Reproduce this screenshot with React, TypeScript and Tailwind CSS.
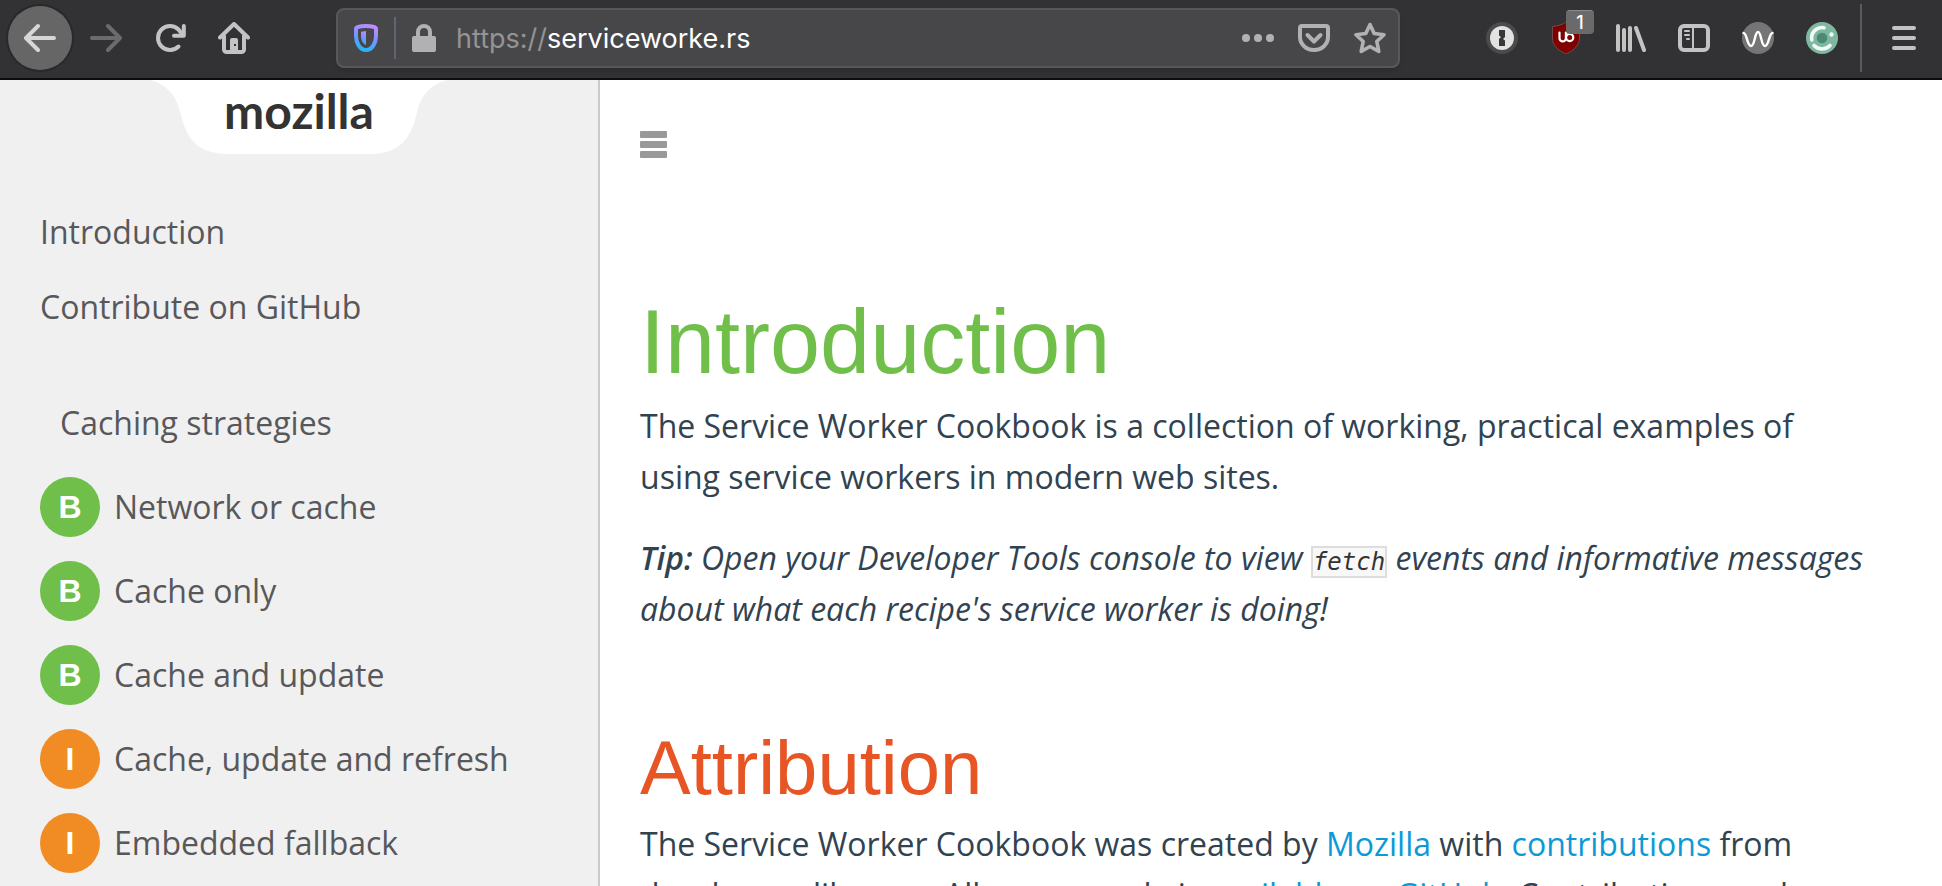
import type { ReactNode } from "react";

function ToolButton({ label, className = "", children }: { label: string; className?: string; children: ReactNode }) {
  return (
    <button type="button" aria-label={label} className={`flex size-8 shrink-0 items-center justify-center ${className}`}>
      {children}
    </button>
  );
}

function BackIcon() {
  return (
    <svg className="size-8" viewBox="0 0 32 32" fill="none" stroke="currentColor" strokeWidth="4" strokeLinecap="round" strokeLinejoin="round" aria-hidden="true">
      <path d="M30 16H3M14 4 2 16l12 12" />
    </svg>
  );
}

function ForwardIcon() {
  return (
    <svg className="size-8" viewBox="0 0 32 32" fill="none" stroke="currentColor" strokeWidth="4" strokeLinecap="round" strokeLinejoin="round" aria-hidden="true">
      <path d="M2 16h27M18 4l12 12-12 12" />
    </svg>
  );
}

function ReloadIcon() {
  return (
    <svg className="size-8" viewBox="0 0 32 32" fill="none" stroke="currentColor" strokeWidth="4" strokeLinecap="round" strokeLinejoin="round" aria-hidden="true">
      <path d="M24.500 24.500A12 12 0 1 1 24.500 7.500L28.500 12.500" />
      <path d="M29.800 4v9.800H20" />
    </svg>
  );
}

function HomeIcon() {
  return (
    <svg className="size-8" viewBox="0 0 32 32" aria-hidden="true">
      <path d="M2 15.500 16 2l14 13.500M6 14v13.500a2.500 2.500 0 0 0 2.500 2.500h15a2.500 2.500 0 0 0 2.500-2.500V14" fill="none" stroke="currentColor" strokeWidth="4" strokeLinecap="round" strokeLinejoin="round" />
      <path d="M12 30V18a2 2 0 0 1 2-2h4a2 2 0 0 1 2 2v12z" fill="currentColor" />
      <rect x="16" y="22" width="2" height="2" fill="#323234" />
    </svg>
  );
}

function ShieldIcon() {
  return (
    <svg className="h-7 w-6" viewBox="0 0 24 28" aria-hidden="true">
      <defs>
        <linearGradient id="shield" x1="0.7" y1="0" x2="0.4" y2="1">
          <stop offset="0" stopColor="#b98cff" />
          <stop offset="0.5" stopColor="#7a94ff" />
          <stop offset="1" stopColor="#24b5fa" />
        </linearGradient>
      </defs>
      <path d="M12 2c3.500 0 6.500.6 9 1.300.6.2 1 .6 1 1.200V12c0 6.500-3.500 14-10 14S2 18.500 2 12V4.500c0-.6.400-1 1-1.200C5.500 2.600 8.500 2 12 2z" fill="none" stroke="url(#shield)" strokeWidth="4" />
      <path d="M12 7v14c-3-1-5-5-5-9V7.700z" fill="url(#shield)" />
    </svg>
  );
}

function LockIcon() {
  return (
    <svg className="h-7 w-6" viewBox="0 0 24 28" aria-hidden="true">
      <path d="M6 13V8a6 6 0 0 1 12 0v5" fill="none" stroke="currentColor" strokeWidth="4" />
      <rect x="0" y="12" width="24" height="16" rx="2" fill="currentColor" />
    </svg>
  );
}

function DotsIcon() {
  return (
    <svg className="size-8" viewBox="0 0 32 32" fill="currentColor" aria-hidden="true">
      <circle cx="4" cy="16" r="4" />
      <circle cx="16" cy="16" r="4" />
      <circle cx="28" cy="16" r="4" />
    </svg>
  );
}

function PocketIcon() {
  return (
    <svg className="size-8" viewBox="0 0 32 32" fill="none" stroke="currentColor" strokeWidth="4" strokeLinecap="round" strokeLinejoin="round" aria-hidden="true">
      <path d="M4 4h24a2 2 0 0 1 2 2v9a14 13 0 0 1-28 0V6a2 2 0 0 1 2-2z" />
      <path d="m9.500 13 6.500 6.500L22.500 13" />
    </svg>
  );
}

function StarIcon() {
  return (
    <svg className="size-8" viewBox="0 0 32 32" fill="none" stroke="currentColor" strokeWidth="3.600" strokeLinejoin="round" aria-hidden="true">
      <path d="m16 2.500 4.200 9 9.800 1.300-7.200 6.700 2 9.900L16 24.500l-8.800 4.900 2-9.900L2 12.800l9.800-1.300z" />
    </svg>
  );
}

function KeyholeIcon() {
  return (
    <svg className="size-8" viewBox="0 0 32 32" aria-hidden="true">
      <circle cx="16" cy="16" r="16" fill="#4b4b4c" />
      <circle cx="16" cy="16" r="12" fill="#e2e2e3" />
      <path d="M13 8h6v7l-2 2 2 1.500V24h-6v-7l2-2-2-1.500z" fill="#38383a" />
    </svg>
  );
}

function BlockerIcon() {
  return (
    <svg className="size-8" viewBox="0 0 32 32" aria-hidden="true">
      <path d="M16 0c4 3 8 4 13.500 4.500V16c0 7-5 12-13.500 16C7.500 28 2.500 23 2.500 16V4.500C8 4 12 3 16 0z" fill="#800000" stroke="#8b7474" strokeWidth="0.500" />
      <path d="M9.500 10.500v5.700a3.200 3.200 0 0 0 6.400 0v-5.700M15.900 15.500v-5" fill="none" stroke="#fff" strokeWidth="2.200" strokeLinecap="round" />
      <circle cx="19.700" cy="15.500" r="3.600" fill="none" stroke="#fff" strokeWidth="2.200" />
    </svg>
  );
}

function LibraryIcon() {
  return (
    <svg className="size-8" viewBox="0 0 32 32" fill="none" stroke="currentColor" strokeWidth="4" strokeLinecap="round" aria-hidden="true">
      <path d="M4 4v24M10 8v20M16 6v22M22 6l8 22" />
    </svg>
  );
}

function SidebarIcon() {
  return (
    <svg className="size-8" viewBox="0 0 32 32" fill="none" stroke="currentColor" aria-hidden="true">
      <rect x="2" y="4" width="28" height="24" rx="4" strokeWidth="4" />
      <path d="M15 6v20" strokeWidth="2" />
      <path d="M7 9h4M7 13h4M9 17h2" strokeWidth="2" strokeLinecap="round" />
    </svg>
  );
}

function WaveIcon() {
  return (
    <svg className="size-8" viewBox="0 0 32 32" aria-hidden="true">
      <circle cx="16" cy="16" r="16" fill="#757575" />
      <path d="M1.500 11C5 11 5 24 9 24s3.500-14 7-14 3 14 7 14 4-13 7.500-13" fill="none" stroke="#fff" strokeWidth="2.400" strokeLinecap="round" />
    </svg>
  );
}

function OrbitIcon() {
  return (
    <svg className="size-8" viewBox="0 0 32 32" fill="none" aria-hidden="true">
      <circle cx="16" cy="16" r="16" fill="#7fb8a2" />
      <circle cx="16" cy="16" r="5.300" fill="#4d8a73" />
      <path d="M5.800 18A10.500 10.500 0 0 1 18 5.700M8 23.500a11 11 0 0 0 16 0" stroke="#f2faf6" strokeWidth="3.600" strokeLinecap="round" />
      <circle cx="25.500" cy="12.500" r="2.200" fill="#f2faf6" />
    </svg>
  );
}

function AppMenuIcon() {
  return (
    <svg className="h-8 w-6" viewBox="0 0 24 32" fill="none" stroke="currentColor" strokeWidth="4" strokeLinecap="round" aria-hidden="true">
      <path d="M2 6h20M2 16h20M2 26h20" />
    </svg>
  );
}

function Toolbar() {
  return (
    <header className="flex h-20 shrink-0 items-center border-b-2 border-[#0c0c0d] bg-[#323234] pb-[2px] text-[#c3c3c4]">
      <div className="flex items-center pl-2">
        <button type="button" aria-label="Back" className="flex size-16 items-center justify-center rounded-full bg-[#666667] text-[#d6d6d7] ring-2 ring-[#29292b]">
          <BackIcon />
        </button>
        <ToolButton label="Forward" className="ml-[18px] text-[#6b6b6c]"><ForwardIcon /></ToolButton>
        <ToolButton label="Reload" className="ml-8"><ReloadIcon /></ToolButton>
        <ToolButton label="Home" className="ml-8"><HomeIcon /></ToolButton>
      </div>
      <div className="ml-[86px] flex h-[60px] min-w-0 flex-1 items-center rounded-lg border-2 border-[#58585a] bg-[#474749] pl-4 pr-3 text-[#b1b1b3] shadow-md">
        <button type="button" aria-label="Tracking protection"><ShieldIcon /></button>
        <span className="ml-4 h-[42px] w-[2px] bg-[#5f6673]" />
        <button type="button" aria-label="Connection security" className="ml-4"><LockIcon /></button>
        <div role="textbox" aria-label="Address" className="ml-5 flex-1 truncate pt-[2px] font-['Inter',sans-serif] text-[27px] leading-10 text-white">
          <span className="text-[#949495]">https://</span>serviceworke.rs
        </div>
        <div className="flex gap-6">
          <ToolButton label="Page actions"><DotsIcon /></ToolButton>
          <ToolButton label="Save to Pocket"><PocketIcon /></ToolButton>
          <ToolButton label="Bookmark this page"><StarIcon /></ToolButton>
        </div>
      </div>
      <div className="ml-[86px] flex items-center gap-8">
        <ToolButton label="Password manager"><KeyholeIcon /></ToolButton>
        <ToolButton label="Content blocker" className="relative">
          <BlockerIcon />
          <span className="absolute -top-3 left-4 flex h-6 w-7 items-center justify-center rounded-sm border-t border-[#8a8a8b] bg-[#6a6a6b] font-['Inter',sans-serif] text-lg font-medium text-white">1</span>
        </ToolButton>
        <ToolButton label="Library"><LibraryIcon /></ToolButton>
        <ToolButton label="Sidebars"><SidebarIcon /></ToolButton>
        <ToolButton label="Wave extension"><WaveIcon /></ToolButton>
        <ToolButton label="Container extension"><OrbitIcon /></ToolButton>
      </div>
      <span className="ml-[22px] h-[68px] w-[2px] bg-[#5b5b5d]" />
      <ToolButton label="Open application menu" className="ml-[26px] mr-[22px]"><AppMenuIcon /></ToolButton>
    </header>
  );
}

const recipes = [
  { level: "B", name: "Network or cache" },
  { level: "B", name: "Cache only" },
  { level: "B", name: "Cache and update" },
  { level: "I", name: "Cache, update and refresh" },
  { level: "I", name: "Embedded fallback" },
];

function Sidebar() {
  return (
    <aside className="w-[600px] shrink-0 border-r-2 border-[#cacaca] bg-[#f0f0f0] text-[32px] leading-[44px] text-[#58585b]">
      <a href="#mozilla" className="relative mx-auto flex h-[74px] w-[296px] justify-center">
        <svg className="absolute inset-0 size-full" viewBox="0 0 296 74" aria-hidden="true">
          <path d="M0 0C16 5 24 15 28 28C34 52 40 74 78 74H218C256 74 262 50 267 28C271 14 280 5 296 0z" fill="#fff" />
        </svg>
        <span className="relative font-['Lato',sans-serif] text-[48px] font-bold leading-[62px] text-[#333]">mozilla</span>
      </a>
      <nav className="px-10 pt-14">
        <a href="#introduction" className="block">Introduction</a>
        <a href="#contribute" className="mt-[31px] block">Contribute on GitHub</a>
        <h2 className="mt-[72px] pl-5">Caching strategies</h2>
        <ul className="mt-8 flex flex-col gap-6">
          {recipes.map((recipe) => (
            <li key={recipe.name}>
              <a href="#recipe" className="flex items-center gap-[14px]">
                <span className={`flex size-[60px] items-center justify-center rounded-full font-['Liberation_Sans',Arial,sans-serif] text-[32px] font-bold text-white ${recipe.level === "B" ? "bg-[#70bf4a]" : "bg-[#f18c24]"}`}>
                  {recipe.level}
                </span>
                {recipe.name}
              </a>
            </li>
          ))}
        </ul>
      </nav>
    </aside>
  );
}

function Article() {
  return (
    <main className="min-w-0 flex-1 bg-white pl-10 pr-[68px] pt-[51px] text-[32px] leading-[51px] text-[#314351]">
      <button type="button" aria-label="Toggle navigation" className="flex flex-col gap-[3px]">
        <span className="h-[7px] w-[27px] rounded-[1px] bg-[#999]" />
        <span className="h-[7px] w-[27px] rounded-[1px] bg-[#999]" />
        <span className="h-[7px] w-[27px] rounded-[1px] bg-[#999]" />
      </button>
      <h1 className="mt-[130px] font-['Liberation_Sans',Arial,sans-serif] text-[90px] leading-[108px] text-[#70bf4a]">Introduction</h1>
      <p className="mt-1">
        The Service Worker Cookbook is a collection of working, practical examples of using service workers in modern web sites.
      </p>
      <p className="mt-[30px] italic">
        <strong className="font-semibold">Tip:</strong> Open your Developer Tools console to view{" "}
        <code className="border-2 border-[#ddd] bg-[#f8f8f8] font-['DejaVu_Sans_Mono',monospace] text-[24px] leading-8 text-[#333]">fetch</code>{" "}
        events and informative messages about what each recipe's service worker is doing!
      </p>
      <h2 className="mt-[88px] font-['Liberation_Sans',Arial,sans-serif] text-[76px] leading-[92px] text-[#e75525]">Attribution</h2>
      <p className="mt-1">
        The Service Worker Cookbook was created by <a href="#mozilla" className="text-[#0c9ad7]">Mozilla</a> with{" "}
        <a href="#contributions" className="text-[#0c9ad7]">contributions</a> from developers like you. All source code is{" "}
        <a href="#github" className="text-[#0c9ad7]">available on GitHub</a>. Contributions and
      </p>
    </main>
  );
}

export default function App() {
  return (
    <div className="flex h-screen flex-col overflow-hidden font-['Open_Sans',sans-serif]">
      <Toolbar />
      <div className="flex min-h-0 flex-1">
        <Sidebar />
        <Article />
      </div>
    </div>
  );
}
